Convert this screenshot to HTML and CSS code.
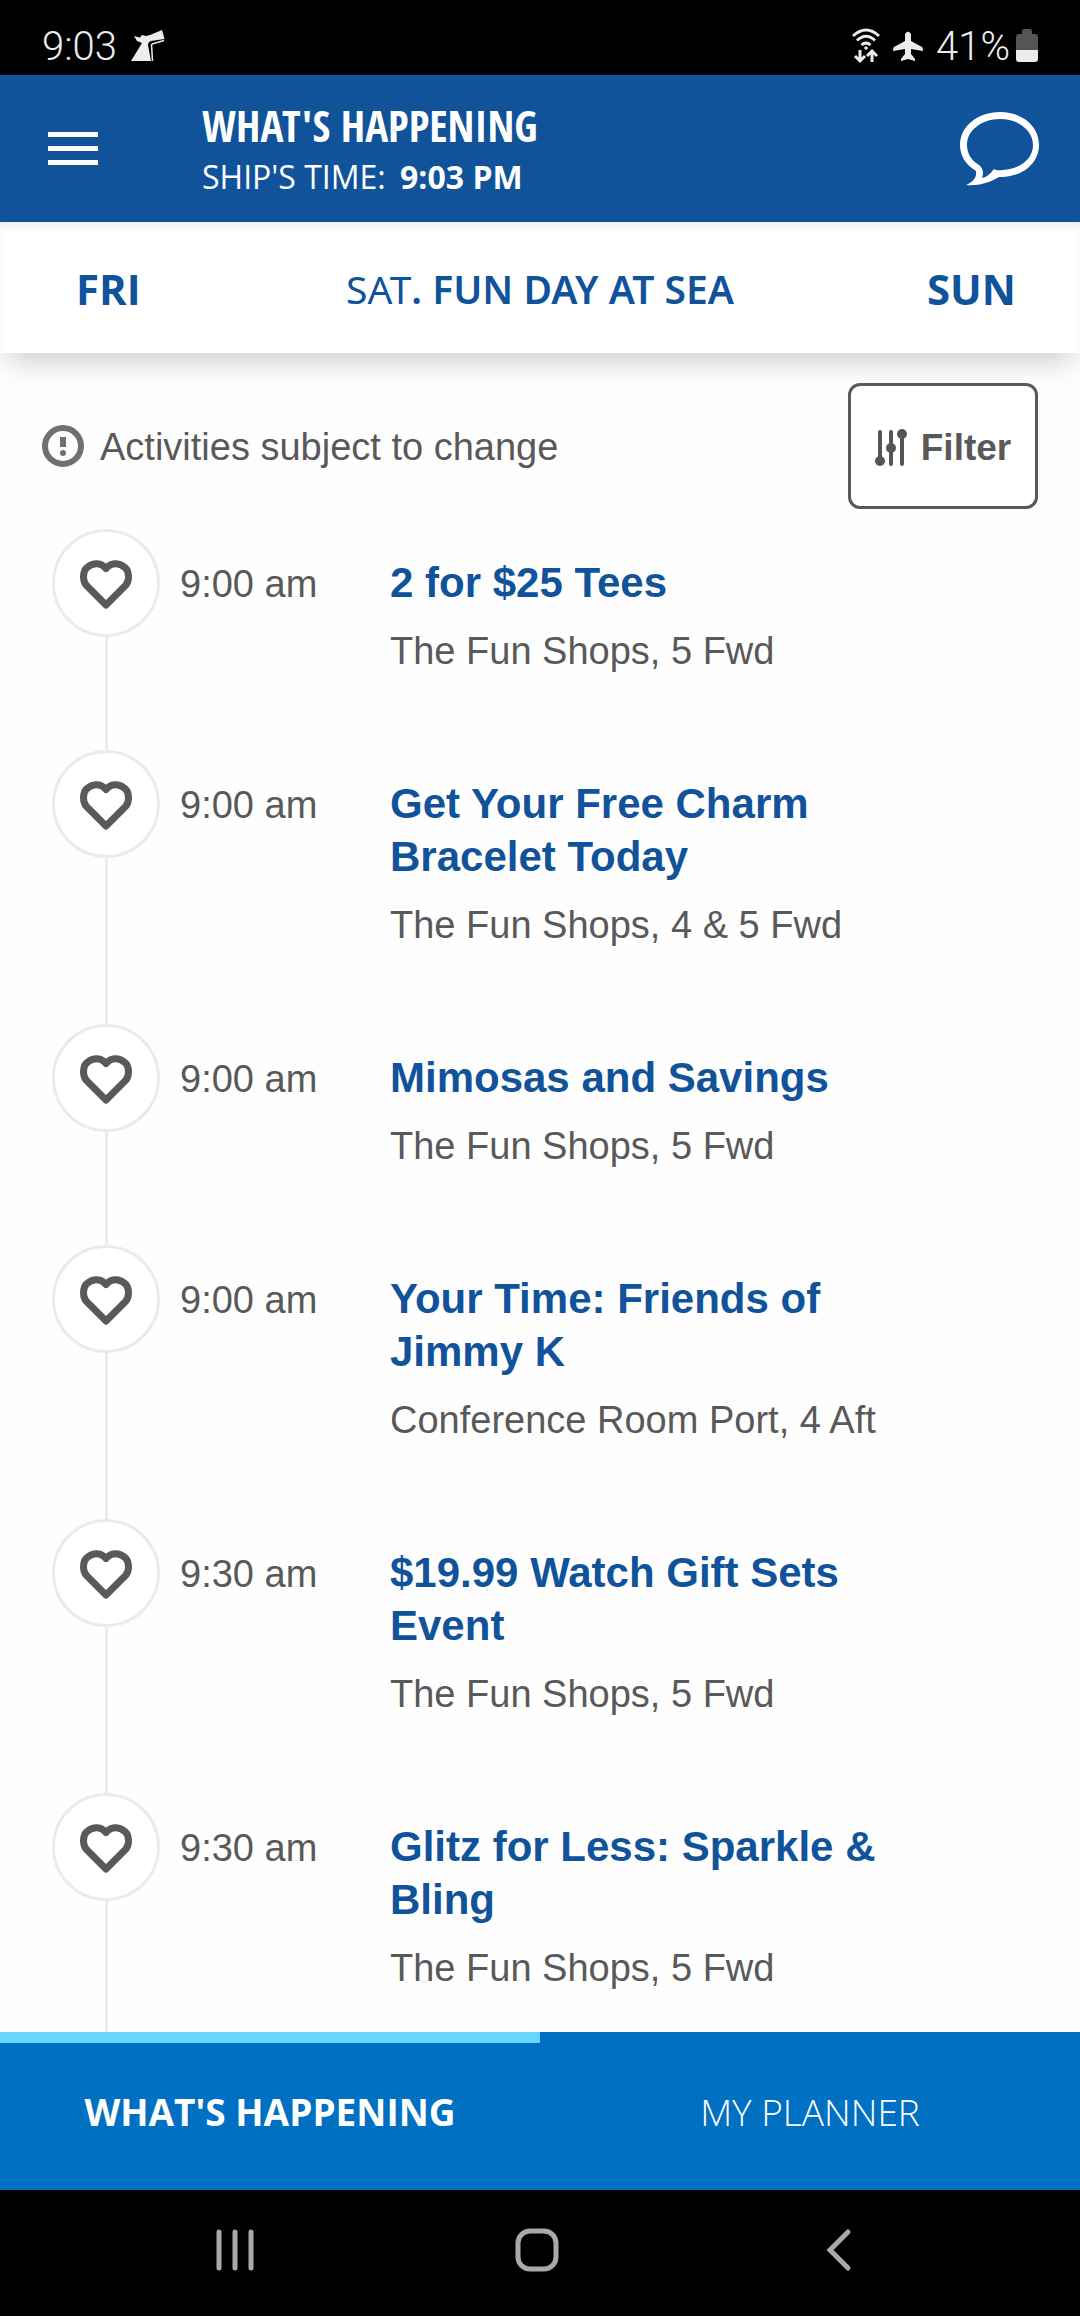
FILE: index.html
```html
<!DOCTYPE html>
<html lang="en">
  <head>
    <meta charset="UTF-8" />
    <meta name="viewport" content="width=device-width, initial-scale=1.0" />
    <title>What's Happening</title>
    <link rel="stylesheet" href="styles.css">
  </head>
  <body>
    <!-- icons used more than once -->
    <svg class="sprite" aria-hidden="true">
      <symbol id="heart" viewBox="0 0 54 50">
        <path d="M27 45 L7.500 25.500 C3.500 21.500 3.500 12 7.500 8 C13 2.500 21 2.500 25 6.500 L27 8.500 L29 6.500 C33 2.500 41 2.500 46.500 8 C50.500 12 50.500 21.500 46.500 25.500 Z" fill="none" stroke="#595959" stroke-width="7" stroke-linejoin="round" />
      </symbol>
    </svg>

    <div class="status-bar">
      <span class="clock">9:03</span>
      <svg class="statue" width="34" height="32" viewBox="0 0 34 32" aria-hidden="true">
        <path d="M0 31 L11 13 L6 11 L3 6 L9 7.500 L11 5 L15 6 L19 5 L31 0 L33.500 9 L20 11 Q17 12 17 15 L20 31 Z" fill="#ececec" />
        <path d="M21 14 L33 10.500 M20.500 14 L21.500 31" fill="none" stroke="#ececec" stroke-width="1.500" />
      </svg>
      <div class="status-icons">
        <svg width="28" height="36" viewBox="0 0 28 36" aria-hidden="true">
          <g fill="none" stroke="#ececec" stroke-width="3">
            <path d="M1 8 Q14 -4 27 8" />
            <path d="M5 12.500 Q14 4 23 12.500" />
            <path d="M9.500 17 Q14 13 18.500 17" />
            <path d="M8 22 V33 M3 28 L8 33 L13 28" />
            <path d="M20 34 V23 M15 28 L20 23 L25 28" />
          </g>
          <circle cx="14" cy="20" r="1.800" fill="#ececec" />
        </svg>
        <svg width="32" height="30" viewBox="0 0 32 30" aria-hidden="true">
          <path d="M13 3 Q16 -2 19 3 V10 L30 16 Q31 17 31 20 L19 18 V23 L23 28 V30 L16 28 L9 30 V28 L13 23 V18 L1 20 Q1 17 2 16 L13 10 Z" fill="#ececec" />
        </svg>
        <span class="battery-level">41%</span>
        <svg width="22" height="34" viewBox="0 0 22 34" aria-hidden="true">
          <path d="M6 2 Q6 0 8 0 H14 Q16 0 16 2 V5 H19 Q22 5 22 8 V21 H0 V8 Q0 5 3 5 H6 Z" fill="#555" />
          <path d="M0 21 H22 V30 Q22 33 19 33 H3 Q0 33 0 30 Z" fill="#ececec" />
        </svg>
      </div>
    </div>

    <header class="header">
      <button class="menu-btn" type="button" aria-label="Menu">
        <span></span>
        <span></span>
        <span></span>
      </button>
      <div class="header-text">
        <h1>WHAT'S HAPPENING</h1>
        <p>SHIP'S TIME: <strong>9:03 PM</strong></p>
      </div>
      <button class="chat-btn" type="button" aria-label="Chat">
        <svg width="80" height="74" viewBox="0 0 80 74" aria-hidden="true">
          <path fill-rule="evenodd" d="M40 0 C62 0 79 14 79 33 C79 52 61 66 39 65 C29 71 18 74 6 73 C13 70 17 66 16 59 C6 53 0 44 0 33 C0 14 18 0 40 0 Z M40 7 C22 7 7 18 7 33 C7 42 12 49 19 53 C23 56 24 61 22 66 C27 65 30 62 34 57 C37 59 40 58 43 58 C60 57 73 47 73 33 C73 18 58 7 40 7 Z" fill="#fff" />
        </svg>
      </button>
    </header>

    <nav class="days">
      <a class="day prev" href="#fri">FRI</a>
      <a class="today" href="#sat"><span>SAT</span>. FUN DAY AT SEA</a>
      <a class="day next" href="#sun">SUN</a>
    </nav>

    <main class="content">
      <div class="notice">
        <svg width="42" height="42" viewBox="0 0 42 42" aria-hidden="true">
          <circle cx="21" cy="21" r="18" fill="none" stroke="#6f7072" stroke-width="6" />
          <path d="M18 12 H24 V22 H18 Z" fill="#6f7072" />
          <circle cx="21" cy="28" r="3" fill="#6f7072" />
        </svg>
        <p>Activities subject to change</p>
        <button class="filter-btn" type="button">
          <svg width="32" height="38" viewBox="0 0 32 38" aria-hidden="true">
            <path d="M5 3 V34 M16 3 V35 M27 5 V35" stroke="#555" stroke-width="4" stroke-linecap="round" />
            <circle cx="5" cy="32" r="5" fill="#555" />
            <circle cx="16" cy="19" r="5" fill="#555" />
            <circle cx="27" cy="5" r="5" fill="#555" />
          </svg>
          Filter
        </button>
      </div>

      <ul class="events">
        <li class="event">
          <button class="fav" type="button" aria-label="Add to planner"><svg><use href="#heart" /></svg></button>
          <time>9:00 am</time>
          <div class="info">
            <h2>2 for $25 Tees</h2>
            <p>The Fun Shops, 5 Fwd</p>
          </div>
        </li>
        <li class="event">
          <button class="fav" type="button" aria-label="Add to planner"><svg><use href="#heart" /></svg></button>
          <time>9:00 am</time>
          <div class="info">
            <h2>Get Your Free Charm Bracelet Today</h2>
            <p>The Fun Shops, 4 &amp; 5 Fwd</p>
          </div>
        </li>
        <li class="event">
          <button class="fav" type="button" aria-label="Add to planner"><svg><use href="#heart" /></svg></button>
          <time>9:00 am</time>
          <div class="info">
            <h2>Mimosas and Savings</h2>
            <p>The Fun Shops, 5 Fwd</p>
          </div>
        </li>
        <li class="event">
          <button class="fav" type="button" aria-label="Add to planner"><svg><use href="#heart" /></svg></button>
          <time>9:00 am</time>
          <div class="info">
            <h2>Your Time: Friends of Jimmy K</h2>
            <p>Conference Room Port, 4 Aft</p>
          </div>
        </li>
        <li class="event">
          <button class="fav" type="button" aria-label="Add to planner"><svg><use href="#heart" /></svg></button>
          <time>9:30 am</time>
          <div class="info">
            <h2>$19.99 Watch Gift Sets Event</h2>
            <p>The Fun Shops, 5 Fwd</p>
          </div>
        </li>
        <li class="event">
          <button class="fav" type="button" aria-label="Add to planner"><svg><use href="#heart" /></svg></button>
          <time>9:30 am</time>
          <div class="info">
            <h2>Glitz for Less: Sparkle &amp; Bling</h2>
            <p>The Fun Shops, 5 Fwd</p>
          </div>
        </li>
      </ul>
    </main>

    <nav class="tabs">
      <a class="tab active" href="#happening">WHAT'S HAPPENING</a>
      <a class="tab" href="#planner">MY PLANNER</a>
    </nav>

    <div class="system-nav">
      <button type="button" aria-label="Recent apps">
        <svg width="44" height="44" viewBox="0 0 44 44"><path d="M6 4 V40 M22 4 V40 M38 4 V40" stroke="#a9a9a9" stroke-width="5" stroke-linecap="round" /></svg>
      </button>
      <button type="button" aria-label="Home">
        <svg width="44" height="44" viewBox="0 0 44 44"><rect x="3" y="3" width="38" height="38" rx="12" fill="none" stroke="#a9a9a9" stroke-width="5" /></svg>
      </button>
      <button type="button" aria-label="Back">
        <svg width="44" height="44" viewBox="0 0 44 44"><path d="M31 4 L13 22 L31 40" fill="none" stroke="#a9a9a9" stroke-width="5" stroke-linecap="round" /></svg>
      </button>
    </div>
  </body>
</html>
```
FILE: styles.css
```css
* {
  box-sizing: border-box;
}
body {
  font-family: "Liberation Sans", Arial, sans-serif;
  background-color: #fefefe;
  color: #595959;
  margin: 0;
  height: 100vh;
  display: flex;
  flex-direction: column;
  font-size: 38px;
}
h1,
h2,
p,
ul {
  margin: 0;
  padding: 0;
}
a {
  text-decoration: none;
}
button {
  background: none;
  border: none;
  padding: 0;
  color: inherit;
  font-family: inherit;
}
svg {
  display: block;
  flex-shrink: 0;
}
.sprite {
  display: none;
}

/* phone status bar */
.status-bar {
  display: flex;
  align-items: center;
  padding: 17px 42px 0 42px;
  height: 75px;
  background-color: #000;
  color: #ececec;
  font-family: Roboto, sans-serif;
  font-size: 40px;
  font-weight: 300;
}
.statue {
  margin-left: 14px;
}
.status-icons {
  display: flex;
  align-items: center;
  gap: 12px;
  margin-left: auto;
}
.battery-level {
  margin-right: -6px;
}

/* header */
.header {
  display: flex;
  align-items: center;
  height: 147px;
  padding: 0 40px 0 48px;
  background-color: #10539a;
  color: #fff;
  font-family: "Open Sans", sans-serif;
}
.menu-btn {
  display: flex;
  flex-direction: column;
  gap: 9px;
  width: 50px;
  margin-right: 104px;
}
.menu-btn span {
  height: 5px;
  background-color: #fff;
}
.header-text {
  flex: 1;
  padding-top: 6px;
}
.header-text h1 {
  font-family: "Open Sans Condensed", "Roboto Condensed", "Liberation Sans Narrow", sans-serif;
  font-size: 43px;
  line-height: 50px;
  white-space: nowrap;
}
.header-text p {
  font-size: 32px;
  line-height: 52px;
}
.header-text strong {
  margin-left: 6px;
}

/* day switcher */
.days {
  display: grid;
  grid-template-columns: 1fr auto 1fr;
  align-items: center;
  height: 131px;
  padding: 2px 64px 0;
  background-color: #fff;
  box-shadow: inset 0 8px 12px -6px rgba(0, 0, 0, 0.1), 0 16px 28px -8px rgba(0, 0, 0, 0.2);
  font-family: "Open Sans", sans-serif;
  font-size: 42px;
  font-weight: bold;
}
.days a {
  color: #10539a;
}
.days .today {
  font-family: "Noto Sans", sans-serif;
  font-size: 39px;
  font-weight: 600;
}
.today span {
  font-weight: 400;
}
.prev {
  padding-left: 12px;
}
.next {
  text-align: right;
}

/* activities */
.content {
  flex: 1;
  min-height: 0;
  overflow: hidden;
}
.notice {
  display: flex;
  align-items: center;
  padding: 30px 42px 20px 42px;
}
.notice p {
  flex: 1;
  margin-left: 16px;
  padding-top: 3px;
}
.filter-btn {
  display: flex;
  align-items: center;
  justify-content: center;
  gap: 14px;
  width: 190px;
  height: 126px;
  padding-top: 3px;
  border: 3px solid #595959;
  border-radius: 12px;
  background-color: #fff;
  font-size: 37px;
  font-weight: bold;
}
.events {
  list-style: none;
  padding: 0 170px 0 52px;
}
.event {
  display: grid;
  grid-template-columns: 108px 190px 1fr;
  column-gap: 20px;
  background: linear-gradient(#ebebeb, #ebebeb) 53px 0 / 3px 100% no-repeat;
}
.fav {
  display: flex;
  align-items: center;
  justify-content: center;
  width: 108px;
  height: 108px;
  padding-top: 4px;
  border: 3px solid #ebebeb;
  border-radius: 50%;
  background-color: #fff;
}
.fav svg {
  width: 54px;
  height: 50px;
}
.event time {
  padding-top: 29px;
  line-height: 53px;
}
.info {
  padding: 27px 0 77px;
}
.info h2 {
  color: #10539a;
  font-size: 42px;
  line-height: 53px;
}
.info p {
  margin-top: 20px;
  line-height: 44px;
}

/* bottom tabs */
.tabs {
  display: flex;
  height: 158px;
  background-color: #0070c3;
  font-family: "Open Sans", sans-serif;
  font-size: 37px;
}
.tab {
  flex: 1;
  display: flex;
  align-items: center;
  justify-content: center;
  border-top: 11px solid transparent;
  padding-bottom: 10px;
  color: #fff;
  font-weight: 300;
}
.tab.active {
  border-top-color: #66d6ff;
  font-weight: bold;
}

/* android buttons */
.system-nav {
  display: flex;
  height: 126px;
  padding: 0 90px 6px 84px;
  background-color: #000;
}
.system-nav button {
  flex: 1;
  display: flex;
  align-items: center;
  justify-content: center;
}
```
